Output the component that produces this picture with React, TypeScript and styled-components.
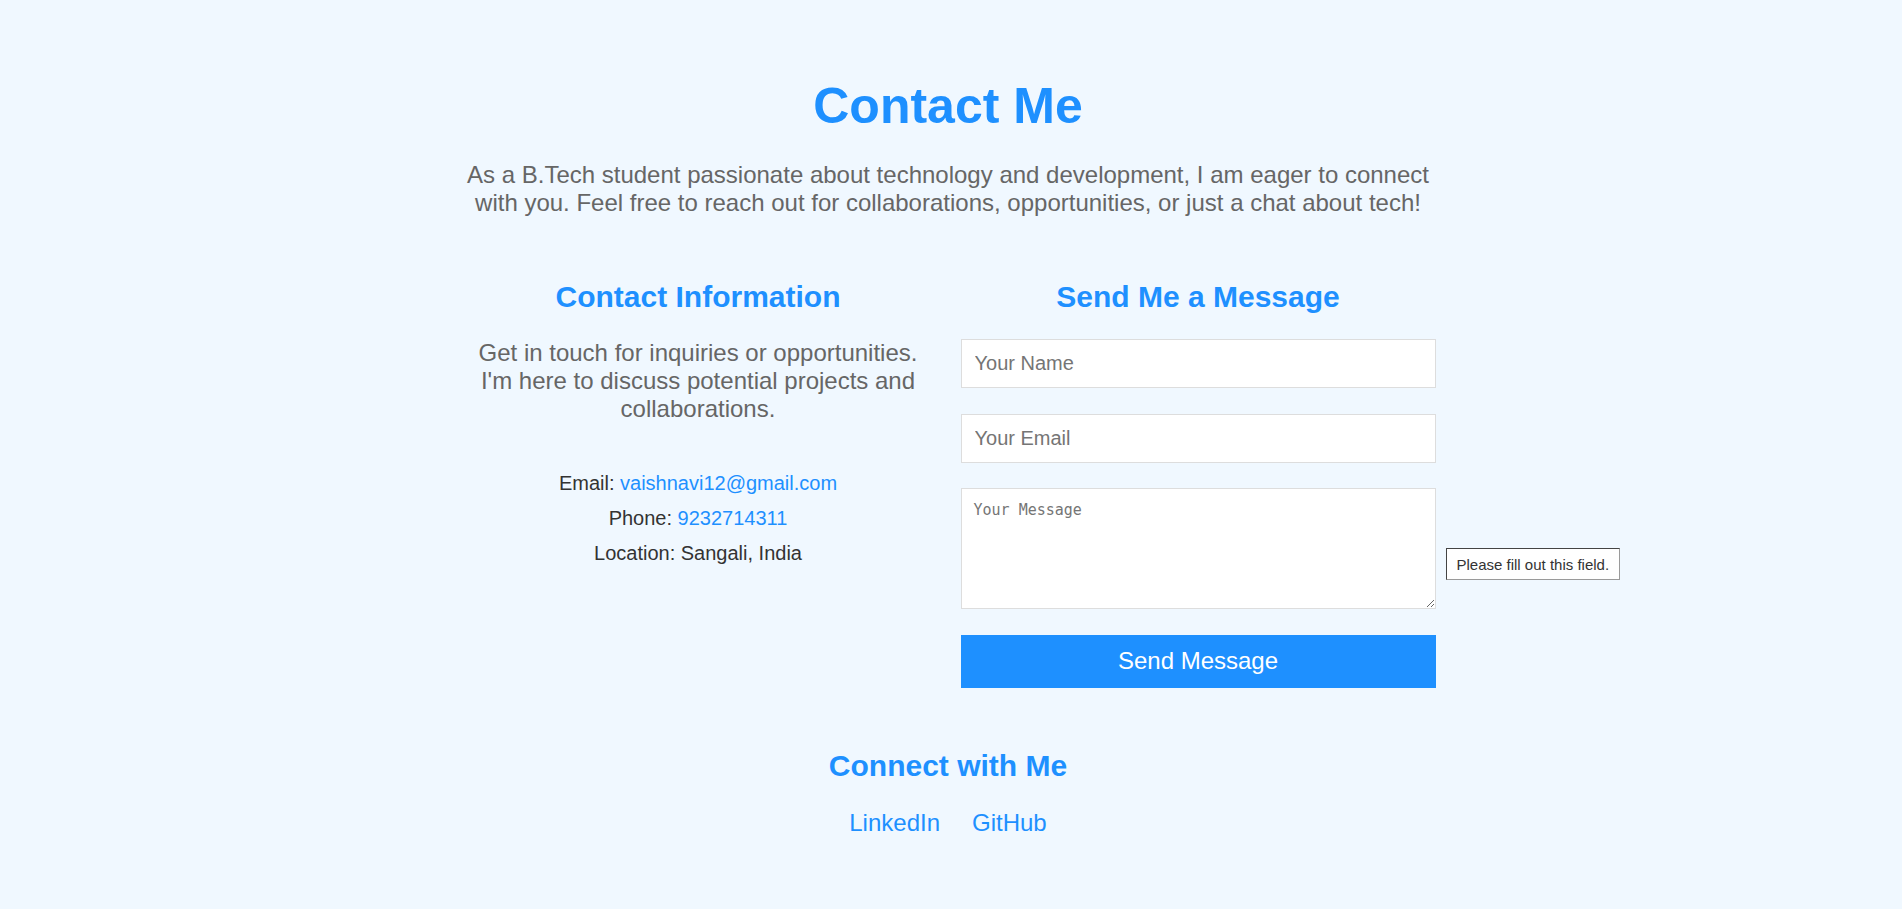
import React from "react";
import styled, { createGlobalStyle } from "styled-components";

const GlobalStyle = createGlobalStyle`
  html, body {
    margin: 0;
    padding: 0;
    background: #f0f8ff;
  }
  body {
    font-family: "Liberation Sans", Arial, sans-serif;
  }
  * { box-sizing: border-box; }
`;

const Page = styled.div`
  padding: 77px 6px 20px 0;
`;

const Container = styled.main`
  width: 1000px;
  margin: 0 auto;
  text-align: center;
`;

const Title = styled.h1`
  margin: 0;
  font-size: 50px;
  line-height: 58px;
  font-weight: 700;
  color: #1e90ff;
`;

const Intro = styled.p`
  margin: 26px 0 0;
  font-size: 24px;
  line-height: 28px;
  color: #666666;
`;

const Columns = styled.section`
  display: flex;
  margin-top: 62px;
`;

const Column = styled.div`
  flex: 1;
  padding: 0 12.5px;
  text-align: center;
`;

const SectionTitle = styled.h2`
  margin: 0;
  font-size: 30px;
  line-height: 35px;
  font-weight: 700;
  color: #1e90ff;
`;

const Lead = styled.p`
  margin: 25px 0 0;
  font-size: 24px;
  line-height: 28px;
  color: #666666;
`;

const InfoList = styled.div`
  display: flex;
  flex-direction: column;
  gap: 12px;
  margin-top: 49px;
`;

const InfoLine = styled.p`
  margin: 0;
  font-size: 20px;
  line-height: 23px;
  color: #333333;
`;

const Link = styled.a`
  color: #1e90ff;
  text-decoration: none;
`;

const Form = styled.form`
  display: flex;
  flex-direction: column;
  gap: 25.5px;
  margin-top: 25px;
`;

const Input = styled.input`
  width: 100%;
  height: 49px;
  padding: 0 13px;
  border: 1px solid #dddddd;
  background: #ffffff;
  font-family: "Liberation Sans", Arial, sans-serif;
  font-size: 20px;
  color: #333;
  outline: none;
  &::placeholder {
    color: #757575;
  }
`;

const TextAreaWrap = styled.div`
  position: relative;
`;

const TextArea = styled.textarea`
  display: block;
  width: 100%;
  height: 121px;
  padding: 12px;
  border: 1px solid #dddddd;
  background: #ffffff;
  font-family: "DejaVu Sans Mono", "Liberation Mono", monospace;
  font-size: 15px;
  color: #333;
  outline: none;
  &::placeholder {
    color: #757575;
  }
`;

const Bubble = styled.div`
  position: absolute;
  left: calc(100% + 10px);
  top: 60px;
  height: 32px;
  padding: 0 10px;
  display: flex;
  align-items: center;
  white-space: nowrap;
  background: #ffffff;
  border: 1px solid #444444;
  border-right-color: #9a9a9a;
  border-bottom-color: #9a9a9a;
  font-family: "Liberation Sans", Arial, sans-serif;
  font-size: 15px;
  color: #333333;
`;

const SubmitButton = styled.button`
  width: 100%;
  height: 53px;
  border: none;
  background: #1e90ff;
  color: #ffffff;
  font-family: "Liberation Sans", Arial, sans-serif;
  font-size: 24px;
  cursor: pointer;
`;

const Social = styled.section`
  margin-top: 60px;
`;

const SocialLinks = styled.div`
  display: flex;
  justify-content: center;
  gap: 32px;
  margin-top: 26px;
  font-size: 24px;
  line-height: 28px;
`;

export default function App() {
  return (
    <>
      <GlobalStyle />
      <Page>
        <Container>
          <Title>Contact Me</Title>
          <Intro>
            As a B.Tech student passionate about technology and development, I am eager to connect
            with you. Feel free to reach out for collaborations, opportunities, or just a chat about
            tech!
          </Intro>
          <Columns>
            <Column>
              <SectionTitle>Contact Information</SectionTitle>
              <Lead>
                Get in touch for inquiries or opportunities. I'm here to discuss potential projects
                and collaborations.
              </Lead>
              <InfoList>
                <InfoLine>
                  Email: <Link href="#">vaishnavi12@gmail.com</Link>
                </InfoLine>
                <InfoLine>
                  Phone: <Link href="#">9232714311</Link>
                </InfoLine>
                <InfoLine>Location: Sangali, India</InfoLine>
              </InfoList>
            </Column>
            <Column>
              <SectionTitle>Send Me a Message</SectionTitle>
              <Form onSubmit={(e) => e.preventDefault()}>
                <Input type="text" placeholder="Your Name" />
                <Input type="email" placeholder="Your Email" />
                <TextAreaWrap>
                  <TextArea placeholder="Your Message" />
                  <Bubble>Please fill out this field.</Bubble>
                </TextAreaWrap>
                <SubmitButton type="submit">Send Message</SubmitButton>
              </Form>
            </Column>
          </Columns>
          <Social>
            <SectionTitle>Connect with Me</SectionTitle>
            <SocialLinks>
              <Link href="#">LinkedIn</Link>
              <Link href="#">GitHub</Link>
            </SocialLinks>
          </Social>
        </Container>
      </Page>
    </>
  );
}
